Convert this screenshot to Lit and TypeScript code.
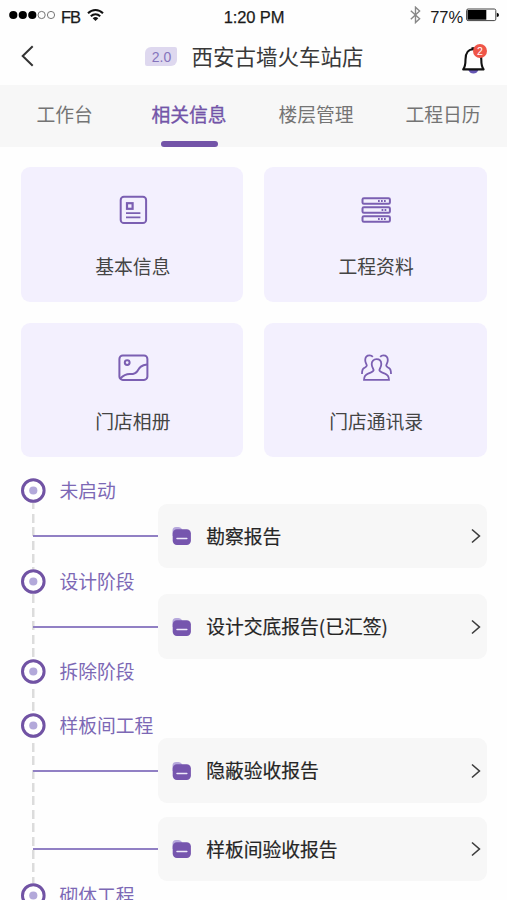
import { LitElement, html, css, svg } from "lit";
import { customElement } from "lit/decorators.js";
import { styleMap } from "lit/directives/style-map.js";

interface Stage {
  name: string;
  height: number;
  dash: number;
  reports: string[];
}

const STAGES: Stage[] = [
  { name: "未启动", height: 90.5, dash: 23, reports: ["勘察报告"] },
  { name: "设计阶段", height: 90, dash: 13.5, reports: ["设计交底报告(已汇签)"] },
  { name: "拆除阶段", height: 54, dash: 18, reports: [] },
  { name: "样板间工程", height: 170, dash: 18, reports: ["隐蔽验收报告", "样板间验收报告"] },
  { name: "砌体工程", height: 60, dash: 18, reports: [] },
];

const ICONS = {
  info: svg`
    <rect x="5.7" y="2.7" width="25.4" height="26.4" rx="3.2" />
    <rect x="12" y="9.2" width="5.6" height="5.6" stroke-width="2.2" />
    <path d="M11 19.2H25.4M11 23.4H25.4" stroke-width="1.8" />`,
  files: svg`
    <rect x="4.5" y="4.2" width="27.4" height="5.6" rx="1.4" />
    <rect x="4.5" y="13.2" width="27.4" height="5.6" rx="1.4" />
    <rect x="4.5" y="22.2" width="27.4" height="5.6" rx="1.4" />
    <path d="M20 7H29M23.6 16H29M20 25H29" stroke-width="1.8" stroke-dasharray="1.7 1.3" />`,
  album: svg`
    <rect x="4.4" y="5.5" width="28" height="24.4" rx="3.4" />
    <circle cx="12.2" cy="12.6" r="2.4" />
    <path d="M5 28.8C8.4 25.4 11.6 24 15 24.1C18.2 24.2 20.4 24.1 22.4 21.1C24.4 18 25.6 15.2 32 14.6" />`,
  people: svg`
    <g stroke-width="1.8">
      <path d="M6 29.9H31C31 26 29.8 24.6 26.4 23.4C23.3 22.3 21.5 21.7 21.4 20.1C21.4 18.8 23.3 17.6 23.3 14C23.3 11.1 21.4 9.2 18.5 9.2S13.7 11.1 13.7 14C13.7 17.6 15.6 18.8 15.6 20.1C15.5 21.7 13.7 22.3 10.6 23.4C7.2 24.6 6 26 6 29.9Z" />
      <path d="M14.8 6.9C14 5.9 12.9 5.4 11.7 5.4C9 5.4 7.2 7.2 7.2 10.1C7.2 13.1 8.8 14.2 8.8 15.6C8.8 17 7.2 17.4 5.9 18.1C4.3 19 4 20.2 4 23.9" />
      <path d="M22.2 6.9C23 5.9 24.1 5.4 25.3 5.4C28 5.4 29.8 7.2 29.8 10.1C29.8 13.1 28.2 14.2 28.2 15.6C28.2 17 29.8 17.4 31.1 18.1C32.7 19 33 20.2 33 23.9" />
    </g>`,
};

const TILES = [
  { label: "基本信息", icon: ICONS.info },
  { label: "工程资料", icon: ICONS.files },
  { label: "门店相册", icon: ICONS.album },
  { label: "门店通讯录", icon: ICONS.people },
];

@customElement("status-bar")
class StatusBar extends LitElement {
  static styles = css`
    :host {
      display: grid;
      grid-template-columns: 1fr auto 1fr;
      align-items: center;
      height: 31px;
      padding: 2px 8px 0 9px;
      box-sizing: border-box;
      font: 16.5px/20px "Liberation Sans", Inter, sans-serif;
      color: #1a1a1a;
      -webkit-text-stroke: 0.25px currentColor;
    }
    svg { display: block; flex: none; }
    .left, .right { display: flex; align-items: center; }
    .carrier { margin: 0 7px 0 5px; letter-spacing: -1px; }
    .wifi { margin-top: -4px; }
    .dots { margin-top: -3px; }
    .right { justify-content: flex-end; }
    .time { letter-spacing: -0.1px; }
    .pct { margin: 0 3px 0 9px; letter-spacing: -0.1px; -webkit-text-stroke: 0; }
    .bt, .batt { margin-top: -3px; }
  `;
  render() {
    return html`
      <div class="left">
        <svg class="dots" width="47" height="10" fill="#000">
          ${[4.3, 13.8, 23.3].map((x) => svg`<circle cx=${x} cy="5" r="4.1" />`)}
          ${[32.6, 42].map((x) => svg`<circle cx=${x} cy="5" r="3.6" fill="none" stroke="#666" stroke-width=".9" />`)}
        </svg>
        <span class="carrier">FB</span>
        <svg class="wifi" width="17" height="14" viewBox="0 0 17 14" fill="none" stroke="#111" stroke-width="2">
          <path d="M1 5.2C5.3 .9 11.7 .9 16 5.2M3.8 8.3C6.6 5.7 10.4 5.7 13.2 8.3" />
          <path d="M5.7 10.2Q8.5 8 11.3 10.2L8.5 13Z" fill="#111" stroke="none" />
        </svg>
      </div>
      <span class="time">1:20 PM</span>
      <div class="right">
        <svg class="bt" width="11" height="18" viewBox="0 0 11 18" fill="none" stroke="#888" stroke-width="1.4">
          <path d="M.8 4.7L9.6 12.8L5.5 16.6V1.2L9.6 5L.8 13.2" />
        </svg>
        <span class="pct">77%</span>
        <svg class="batt" width="33" height="14" viewBox="0 0 33 14">
          <rect x=".6" y="1" width="29.2" height="11.6" rx="1.5" fill="none" stroke="#444" stroke-width="1" />
          <rect x="1.5" y="2" width="18.8" height="9.7" />
          <path d="M30.8 4.8Q33 5 33 6.9T30.8 9Z" />
        </svg>
      </div>`;
  }
}

@customElement("report-row")
class ReportRow extends LitElement {
  static properties = { label: {} };
  declare label: string;
  static styles = css`
    :host { display: flex; align-items: center; height: 64.5px; }
    .line { width: 125px; height: 2px; background: #9180c4; flex: none; }
    .card {
      flex: 1;
      height: 100%;
      box-sizing: border-box;
      display: flex;
      align-items: center;
      padding: 0 5px 0 14px;
      background: #f7f7f7;
      border-radius: 9px;
    }
    .name { flex: 1; margin: -2px 0 0 14.2px; color: #252525; -webkit-text-stroke: 0.2px #252525; white-space: nowrap; }
    svg { display: block; flex: none; }
  `;
  render() {
    return html`
      <div class="line"></div>
      <div class="card">
        <svg width="20" height="20" viewBox="0 0 20 20">
          <path d="M.5 10V4.5Q.5 1 4 1H6.5Q8.5 1 9.5 2.6L10.5 4V10Z" fill="#b6a8dc" />
          <rect x=".7" y="3.2" width="18.2" height="15.8" rx="4.2" fill="#7655ae" />
          <path d="M5 12.4H14.8" stroke="#eee9fa" stroke-width="1.5" stroke-linecap="round" />
        </svg>
        <span class="name">${this.label}</span>
        <svg width="12" height="16" viewBox="0 0 12 16" fill="none" stroke="#3c3c3c" stroke-width="1.6">
          <path d="M2 1.5L9.4 8L2 14.5" />
        </svg>
      </div>`;
  }
}

@customElement("stage-item")
class StageItem extends LitElement {
  static properties = { stage: { attribute: false } };
  declare stage: Stage;
  static styles = css`
    :host { display: block; }
    .stage {
      box-sizing: border-box;
      background-position: 10.5px 0;
      background-repeat: no-repeat;
    }
    .head { display: flex; align-items: center; gap: 13.5px; height: 25px; color: #7c68b5; }
    .head svg { display: block; flex: none; }
    .head span { margin-top: -2px; }
    .reports { display: flex; flex-direction: column; gap: 14px; padding: 0.8px 0 0 12px; }
  `;
  render() {
    const s = this.stage;
    const dashes = `repeating-linear-gradient(#dcdcdc 0 9px, #fff 9px 13.4px)`;
    return html`
      <section
        class="stage"
        style=${styleMap({
          height: `${s.height}px`,
          backgroundImage: dashes,
          backgroundSize: "2.5px 100%",
          backgroundPositionY: `${(s.dash + 12.5) % 13.4}px`,
        })}
      >
        <div class="head">
          <svg width="25" height="25" viewBox="0 0 25 25">
            <circle cx="12.3" cy="12.5" r="10.8" fill="#fff" stroke="#7153a4" stroke-width="3" />
            <circle cx="12.3" cy="12.5" r="4.1" fill="#b3a9da" />
          </svg>
          <span>${s.name}</span>
        </div>
        <div class="reports">${s.reports.map((r) => html`<report-row .label=${r}></report-row>`)}</div>
      </section>`;
  }
}

@customElement("app-root")
class AppRoot extends LitElement {
  static styles = css`
    :host {
      display: block;
      height: 900px;
      overflow: hidden;
      background: #fefefe;
      font: 18.8px/25px "Noto Sans CJK SC", sans-serif;
      color: #444;
    }
    svg { display: block; flex: none; }
    .nav { display: flex; align-items: center; height: 54px; padding: 0 19px; box-sizing: border-box; }
    .back { margin: -4px 0 0 1px; }
    .title { flex: 1; display: flex; align-items: center; justify-content: center; gap: 14px; padding-left: 13px; margin-top: -5px; font-size: 21.5px; color: #393939; }
    .ver {
      width: 32px;
      height: 19px;
      margin-top: 2px;
      border-radius: 6px 2px 6px 2px;
      background: #ded8ef;
      color: #8573bc;
      font: 14px/20px "Liberation Sans", sans-serif;
      text-align: center;
    }
    .bell { position: relative; margin: 4px 1px 0 0; }
    .badge {
      position: absolute;
      top: -1px;
      right: 0;
      width: 14px;
      height: 14px;
      border-radius: 50%;
      background: #ef5548;
      color: #fff;
      font: 10.5px/14px "Liberation Sans", sans-serif;
      text-align: center;
    }
    .tabs { display: grid; grid-template-columns: 115px 127px 127px 1fr; justify-items: start; height: 61.5px; padding: 0 0 0 36.5px; box-sizing: border-box; background: #f7f7f7; color: #747474; }
    .tab { display: flex; flex-direction: column; align-items: center; justify-content: space-between; padding-top: 16px; box-sizing: border-box; }
    .tab.active { color: #7354a8; -webkit-text-stroke: 0.35px currentColor; }
    .tab.active::after { content: ""; width: 57px; height: 5.5px; border-radius: 3px; background: #7354a8; }
    .tiles { display: grid; grid-template-columns: 1fr 1fr; gap: 21px; padding: 20.5px 20.5px 21px 21px; }
    .tile { height: 134.5px; box-sizing: border-box; padding: 27px 0 0 1.5px; display: flex; flex-direction: column; align-items: center; gap: 26.5px; background: #f3f0fe; border-radius: 9px; }
    .timeline { padding: 0 20.5px 0 21px; }
  `;
  render() {
    return html`
      <status-bar></status-bar>
      <header class="nav">
        <svg class="back" width="16" height="24" viewBox="0 0 16 24" fill="none" stroke="#333" stroke-width="2">
          <path d="M12.7 2.3L2.7 12L12.7 21.7" />
        </svg>
        <div class="title"><span class="ver">2.0</span><span>西安古墙火车站店</span></div>
        <div class="bell">
          <svg width="27" height="30" viewBox="0 0 27 30">
            <path d="M8.4 25H18.4Q17 28.6 13.4 28.6T8.4 25Z" fill="#6657b5" />
            <path d="M3.2 24.4C5 21.9 5.5 19.4 5.5 14.4C5.5 7.9 8.5 4.3 13.4 4.3S21.3 7.9 21.3 14.4C21.3 19.4 21.8 21.9 23.6 24.4Z" fill="#fff" stroke="#111" stroke-width="2.1" stroke-linejoin="round" />
            <path d="M11.5 3.2H15.3" stroke="#111" stroke-width="2" />
          </svg>
          <span class="badge">2</span>
        </div>
      </header>
      <nav class="tabs">
        <div class="tab">工作台</div>
        <div class="tab active">相关信息</div>
        <div class="tab">楼层管理</div>
        <div class="tab">工程日历</div>
      </nav>
      <main>
        <div class="tiles">
          ${TILES.map(
            (t) => html`<div class="tile">
              <svg width="36" height="32" viewBox="0 0 36 32" fill="none" stroke="#7b5fb2" stroke-width="2">${t.icon}</svg>
              <span>${t.label}</span>
            </div>`
          )}
        </div>
        <div class="timeline">${STAGES.map((s) => html`<stage-item .stage=${s}></stage-item>`)}</div>
      </main>`;
  }
}
